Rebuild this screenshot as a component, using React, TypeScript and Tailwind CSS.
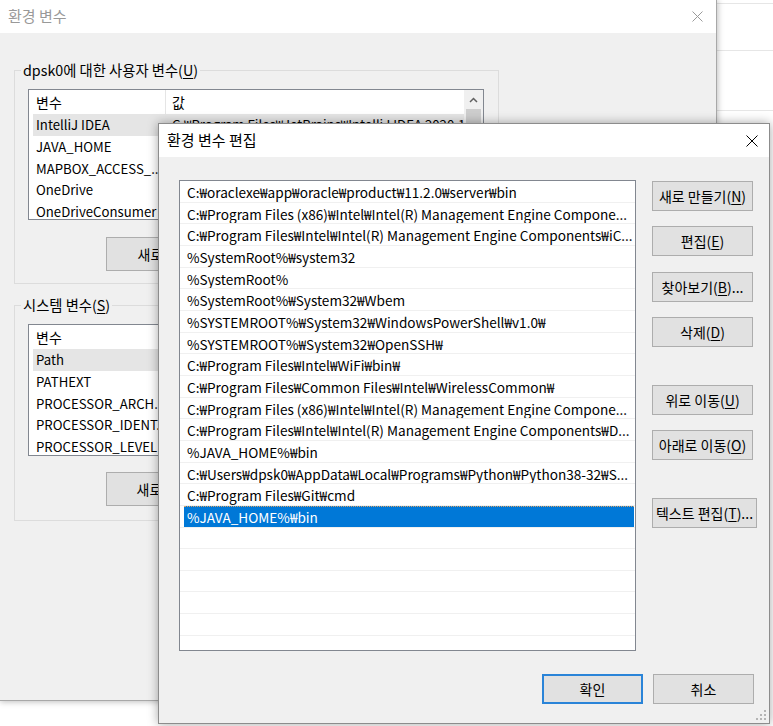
import React from 'react';

const pathEntries: string[] = [
    'C:₩oraclexe₩app₩oracle₩product₩11.2.0₩server₩bin',
    'C:₩Program Files (x86)₩Intel₩Intel(R) Management Engine Compone...',
    'C:₩Program Files₩Intel₩Intel(R) Management Engine Components₩iC...',
    '%SystemRoot%₩system32',
    '%SystemRoot%',
    '%SystemRoot%₩System32₩Wbem',
    '%SYSTEMROOT%₩System32₩WindowsPowerShell₩v1.0₩',
    '%SYSTEMROOT%₩System32₩OpenSSH₩',
    'C:₩Program Files₩Intel₩WiFi₩bin₩',
    'C:₩Program Files₩Common Files₩Intel₩WirelessCommon₩',
    'C:₩Program Files (x86)₩Intel₩Intel(R) Management Engine Compone...',
    'C:₩Program Files₩Intel₩Intel(R) Management Engine Components₩D...',
    '%JAVA_HOME%₩bin',
    'C:₩Users₩dpsk0₩AppData₩Local₩Programs₩Python₩Python38-32₩S...',
    'C:₩Program Files₩Git₩cmd',
    '%JAVA_HOME%₩bin',
];

const SELECTED = 15;
const TOTAL_ROWS = 22;

// names are written the way the list view shows them (already shortened)
const userVars = [
    { name: 'IntelliJ IDEA', value: 'C:₩Program Files₩JetBrains₩IntelliJ IDEA 2020.1₩bin;' },
    { name: 'JAVA_HOME', value: 'C:₩Program Files₩Java₩jdk-14.0.1' },
    { name: 'MAPBOX_ACCESS_...', value: 'pk.eyJ1IjoiZHBzazAiLCJhIjoiY2s' },
    { name: 'OneDrive', value: 'C:₩Users₩dpsk0₩OneDrive' },
    { name: 'OneDriveConsumer', value: 'C:₩Users₩dpsk0₩OneDrive' },
];

const systemVars = [
    { name: 'Path', value: 'C:₩oraclexe₩app₩oracle₩product₩11.2.0₩server₩bin;' },
    { name: 'PATHEXT', value: '.COM;.EXE;.BAT;.CMD;.VBS;.VBE;.JS;.JSE;.WSF;.WSH;.MSC' },
    { name: 'PROCESSOR_ARCH...', value: 'AMD64' },
    { name: 'PROCESSOR_IDENT...', value: 'Intel64 Family 6 Model 142 Stepping 10' },
    { name: 'PROCESSOR_LEVEL', value: '6' },
];

const Mn = ({ children }: { children: React.ReactNode }) => (
    <span className="underline underline-offset-[2px] decoration-1">{children}</span>
);

const CloseIcon = ({ color, size }: { color: string; size: number }) => (
    <svg width={size} height={size} viewBox={`0 0 ${size} ${size}`}>
        <path d={`M0.5 0.5 L${size - 0.5} ${size - 0.5} M${size - 0.5} 0.5 L0.5 ${size - 0.5}`} stroke={color} strokeWidth="1" fill="none" />
    </svg>
);

const WinButton = ({ children, wide, primary }: { children: React.ReactNode; wide?: boolean; primary?: boolean }) => (
    <div
        className={`h-[30px] ${wide ? 'w-[105px]' : 'w-[101px]'} ${
            primary ? 'border-2 border-[#2a84d8]' : 'border border-[#adadad]'
        } bg-[#e1e1e1] flex items-center justify-center text-[14px] leading-none text-black whitespace-nowrap`}
    >
        {children}
    </div>
);

const VarList = ({ rows, heightClass }: { rows: { name: string; value: string }[]; heightClass: string }) => (
    <div className={`ml-[13px] w-[456px] ${heightClass} border border-[#828790] bg-white flex overflow-hidden`}>
        <div className="flex-1 flex flex-col min-w-0">
            <div className="h-[24px] flex shrink-0 text-[14px]">
                <div className="w-[137px] shrink-0 border-r border-[#e5e5e5] pl-[7px] flex items-center">변수</div>
                <div className="pl-[6px] flex items-center">값</div>
            </div>
            {rows.map((r, i) => (
                <div
                    key={r.name}
                    className={`h-[21.67px] shrink-0 ml-[4px] pt-[1px] flex items-center text-[13.2px] whitespace-nowrap ${
                        i === 0 ? 'bg-[#e5e5e5]' : ''
                    }`}
                >
                    <div className="w-[133px] shrink-0 pl-[3px] overflow-hidden">{r.name}</div>
                    <div className="pl-[6px] overflow-hidden">{r.value}</div>
                </div>
            ))}
        </div>
        <div className="w-[19px] shrink-0 bg-[#f0f0f0] flex flex-col items-center">
            <div className="h-[19px] flex items-center justify-center">
                <svg width="9" height="6" viewBox="0 0 9 6">
                    <path d="M1 5 L4.5 1.5 L8 5" stroke="#606060" strokeWidth="1.5" fill="none" />
                </svg>
            </div>
            <div className="w-[15px] h-[60px] bg-[#cdcdcd]" />
        </div>
    </div>
);

const OldButton = ({ children }: { children: React.ReactNode }) => (
    <div className="ml-[91px] w-[162px] h-[34px] border border-[#adadad] bg-[#e1e1e1] flex items-center justify-center text-[14px] whitespace-nowrap">
        {children}
    </div>
);

export default function App() {
    return (
        <div className="relative w-[773px] h-[726px] overflow-hidden bg-white text-black font-['Noto_Sans_CJK_KR','Noto_Sans',sans-serif]">
            {/* window further behind, on the right */}
            <div className="absolute left-[700px] top-0 w-[73px] flex flex-col">
                <div className="h-[4px] border-b border-[#e6e6e6]" />
                <div className="h-[47px] border-b border-[#e6e6e6]" />
                <div className="h-[60px] border-b border-[#e6e6e6]" />
            </div>

            {/* 환경 변수 (inactive) */}
            <div className="absolute left-[-1px] top-[-1px] w-[718px] h-[702px] border border-[#a8a8a8] bg-[#f0f0f0] shadow-[1px_1px_6px_rgba(0,0,0,0.25)] flex flex-col">
                <div className="h-[33px] shrink-0 bg-white flex items-center justify-between pl-[8px] pr-[13px]">
                    <span className="text-[15px] text-[#999999]">환경 변수</span>
                    <CloseIcon color="#9a9a9a" size={11} />
                </div>
                <div className="flex flex-col pt-[27px] pl-[14px]">
                    <fieldset className="w-[485px] h-[224px] border border-[#dcdcdc] flex flex-col">
                        <legend className="ml-[6px] px-[2px] text-[14.3px] leading-[20px]">
                            dpsk0에 대한 사용자 변수(<Mn>U</Mn>)
                        </legend>
                        <div className="mt-[9px]">
                            <VarList rows={userVars} heightClass="h-[131px]" />
                        </div>
                        <div className="mt-[17px]">
                            <OldButton>
                                새로 만들기(<Mn>N</Mn>)...
                            </OldButton>
                        </div>
                    </fieldset>
                    <fieldset className="mt-[11px] w-[485px] h-[226px] border border-[#dcdcdc] flex flex-col">
                        <legend className="ml-[6px] px-[2px] text-[14.3px] leading-[20px]">
                            시스템 변수(<Mn>S</Mn>)
                        </legend>
                        <div className="mt-[9px]">
                            <VarList rows={systemVars} heightClass="h-[132px]" />
                        </div>
                        <div className="mt-[16px]">
                            <OldButton>
                                새로 만들기(<Mn>W</Mn>)...
                            </OldButton>
                        </div>
                    </fieldset>
                </div>
            </div>

            {/* 환경 변수 편집 (active) */}
            <div className="absolute left-[158px] top-[123px] w-[612px] h-[601px] border border-[#8c8c8c] bg-[#f0f0f0] shadow-[0_0_10px_rgba(0,0,0,0.35)] flex flex-col">
                <div className="h-[33px] shrink-0 bg-white flex items-center justify-between pl-[8px] pr-[11px]">
                    <span className="text-[15px]">환경 변수 편집</span>
                    <CloseIcon color="#000000" size={12} />
                </div>
                <div className="flex flex-col pt-[23px] pl-[20px]">
                    <div className="flex">
                        <div className="w-[457px] h-[471px] border border-[#828790] bg-white overflow-hidden flex flex-col">
                            {Array.from({ length: TOTAL_ROWS }).map((_, i) => {
                                const text = pathEntries[i];
                                const sel = i === SELECTED;
                                return (
                                    <div key={i} className="h-[21.67px] shrink-0 border-b border-[#f0f0f0] flex">
                                        <div
                                            className={`ml-[4px] mr-[1px] flex-1 pl-[3px] pt-[2px] flex items-center text-[13.6px] whitespace-nowrap overflow-hidden ${
                                                sel ? 'bg-[#0078d7] text-white border-t border-dotted border-[#d9a46a]' : ''
                                            }`}
                                        >
                                            {text}
                                        </div>
                                    </div>
                                );
                            })}
                        </div>
                        <div className="ml-[16px] mt-[1px] flex flex-col">
                            <WinButton>
                                새로 만들기(<Mn>N</Mn>)
                            </WinButton>
                            <div className="mt-[15px]">
                                <WinButton>
                                    편집(<Mn>E</Mn>)
                                </WinButton>
                            </div>
                            <div className="mt-[16px]">
                                <WinButton>
                                    찾아보기(<Mn>B</Mn>)...
                                </WinButton>
                            </div>
                            <div className="mt-[15px]">
                                <WinButton>
                                    삭제(<Mn>D</Mn>)
                                </WinButton>
                            </div>
                            <div className="mt-[38px]">
                                <WinButton>
                                    위로 이동(<Mn>U</Mn>)
                                </WinButton>
                            </div>
                            <div className="mt-[15px]">
                                <WinButton>
                                    아래로 이동(<Mn>O</Mn>)
                                </WinButton>
                            </div>
                            <div className="mt-[38px]">
                                <WinButton wide>
                                    텍스트 편집(<Mn>T</Mn>)...
                                </WinButton>
                            </div>
                        </div>
                    </div>
                    <div className="mt-[23px] pr-[15px] flex justify-end gap-[10px]">
                        <WinButton primary>확인</WinButton>
                        <WinButton>취소</WinButton>
                    </div>
                </div>
                {/* size grip */}
                <svg className="absolute right-[3px] bottom-[3px]" width="10" height="10" viewBox="0 0 10 10">
                    <rect x="8" y="0" width="2" height="2" fill="#b4b4b4" />
                    <rect x="4" y="4" width="2" height="2" fill="#b4b4b4" />
                    <rect x="8" y="4" width="2" height="2" fill="#b4b4b4" />
                    <rect x="0" y="8" width="2" height="2" fill="#b4b4b4" />
                    <rect x="4" y="8" width="2" height="2" fill="#b4b4b4" />
                    <rect x="8" y="8" width="2" height="2" fill="#b4b4b4" />
                </svg>
            </div>
        </div>
    );
}
